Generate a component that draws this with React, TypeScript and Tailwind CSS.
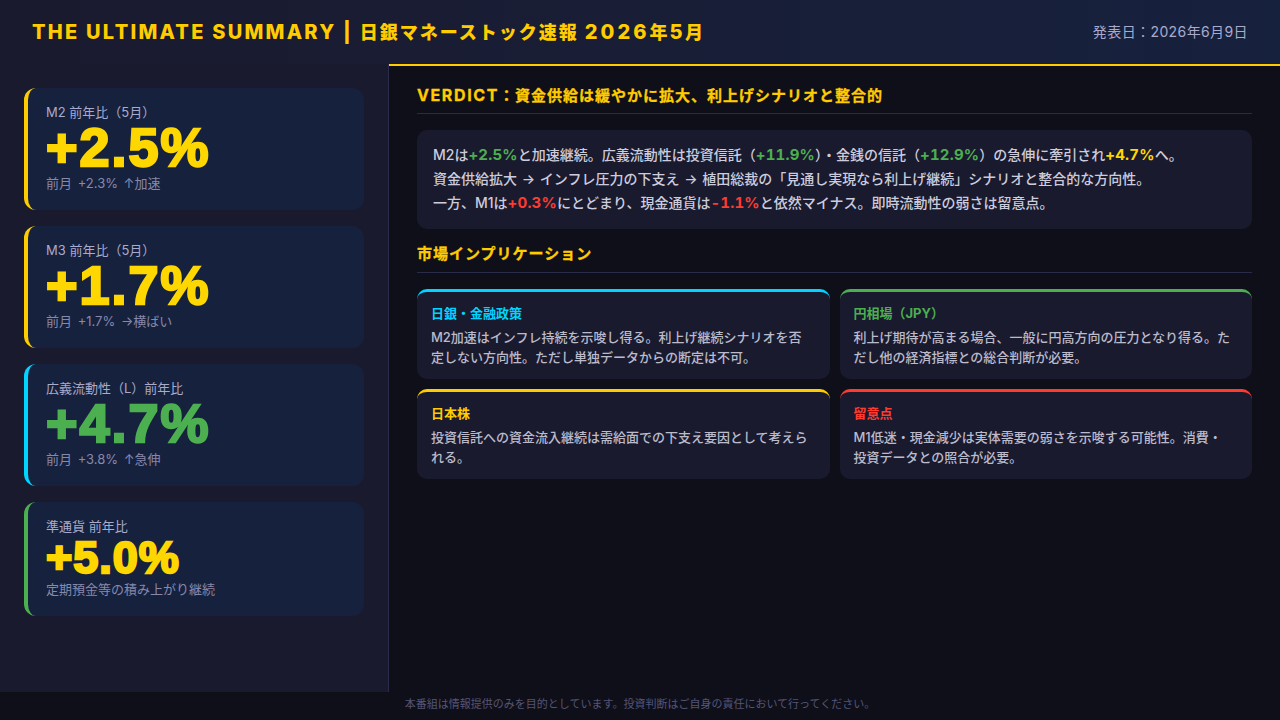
const font = { fontFamily: 'Inter, "Noto Sans CJK JP", sans-serif' };
const bigFont = { fontFamily: '"Liberation Sans", "Noto Sans CJK JP", sans-serif' };

const metrics = [
  { label: 'M2 前年比（5月）', value: '+2.5%', sub: '前月 +2.3% ↑加速', border: 'border-[#ffcc00]', color: 'text-[#ffd700]', size: 'text-[54px] leading-[53px] tracking-[2px]' },
  { label: 'M3 前年比（5月）', value: '+1.7%', sub: '前月 +1.7% →横ばい', border: 'border-[#ffcc00]', color: 'text-[#ffd700]', size: 'text-[54px] leading-[53px] tracking-[2px]' },
  { label: '広義流動性（L）前年比', value: '+4.7%', sub: '前月 +3.8% ↑急伸', border: 'border-[#00d4ff]', color: 'text-[#4caf50]', size: 'text-[54px] leading-[53px] tracking-[2px]' },
  { label: '準通貨 前年比', value: '+5.0%', sub: '定期預金等の積み上がり継続', border: 'border-[#4caf50]', color: 'text-[#ffd700]', size: 'text-[45px] leading-[45px] tracking-[1px]' },
];

const cards = [
  { title: '日銀・金融政策', body: 'M2加速はインフレ持続を示唆し得る。利上げ継続シナリオを否\n定しない方向性。ただし単独データからの断定は不可。', border: 'border-[#00d4ff]', color: 'text-[#00d4ff]' },
  { title: '円相場（JPY）', body: '利上げ期待が高まる場合、一般に円高方向の圧力となり得る。た\nだし他の経済指標との総合判断が必要。', border: 'border-[#4caf50]', color: 'text-[#4caf50]' },
  { title: '日本株', body: '投資信託への資金流入継続は需給面での下支え要因として考えら\nれる。', border: 'border-[#ffcc00]', color: 'text-[#ffcc00]' },
  { title: '留意点', body: 'M1低迷・現金減少は実体需要の弱さを示唆する可能性。消費・\n投資データとの照合が必要。', border: 'border-[#ff3b30]', color: 'text-[#ff3b30]' },
];

function Num({ color, children }: { color: string; children: string }) {
  return <b className={`text-[15px] tracking-[0.2px] tabular-nums ${color}`}>{children}</b>;
}

export default function App() {
  return (
    <div style={font} className="flex h-[720px] w-[1280px] flex-col overflow-hidden bg-[#0f0f1a]">
      {/* Header */}
      <div className="flex h-[64px] shrink-0 items-center justify-between bg-gradient-to-r from-[#1a1a2e] to-[#16213e] px-[32px]">
        <h1 className="text-[18px] font-extrabold tracking-[2px] text-[#ffcc00]">
          <span className="text-[20px] tracking-[2.25px]">THE ULTIMATE SUMMARY | </span>日銀マネーストック速報 <span className="text-[20px] tracking-[3px]">2026</span>年<span className="text-[20px] tracking-[2.5px]">5</span>月
        </h1>
        <span className="pb-0.5 text-[14px] tracking-[0.4px] text-[#aaaacc]">発表日：2026年6月9日</span>
      </div>

      <div className="flex min-h-0 flex-1">
        {/* Metrics */}
        <div className="flex w-[389px] shrink-0 flex-col gap-4 border-r border-[#2a2a4a] bg-[#1a1a2e] p-6">
          {metrics.map((m) => (
            <div key={m.label} className={`rounded-xl border-l-4 bg-[#16213e] pb-[18px] pl-[18px] pr-[18px] pt-[15px] ${m.border}`}>
              <div className="text-[13px] leading-[18px] text-[#aaaacc]">{m.label}</div>
              <div style={bigFont} className={`font-bold [-webkit-text-stroke:2.4px_currentColor] ${m.size} ${m.color}`}>{m.value}</div>
              <div className="text-[13px] leading-[18px] text-[#8888aa] [word-spacing:2px]">{m.sub}</div>
            </div>
          ))}
        </div>

        {/* Verdict + implications */}
        <div className="min-w-0 flex-1 border-t-2 border-[#ffcc00] px-7 pt-[18px]">
          <h2 className="h-[30px] border-b border-[#2a2a4a] text-[15px] font-bold leading-[22px] tracking-[1px] text-[#ffcc00] [-webkit-text-stroke:0.3px_currentColor]">
            <span className="text-[16px] tracking-[1.6px]">VERDICT</span>：資金供給は緩やかに拡大、利上げシナリオと整合的
          </h2>
          <div className="mt-4 rounded-[10px] bg-[#1a1a2e] pb-[14px] pl-4 pr-4 pt-[13px] text-[14px] font-medium leading-[24px] text-[#ccccdd]">
            <p className="h-6">M2は<Num color="text-[#4caf50]">+2.5%</Num>と加速継続。広義流動性は投資信託（<Num color="text-[#4caf50]">+11.9%</Num>）・金銭の信託（<Num color="text-[#4caf50]">+12.9%</Num>）の急伸に牽引され<Num color="text-[#ffd700]">+4.7%</Num>へ。</p>
            <p className="h-6 [word-spacing:1px]">資金供給拡大 → インフレ圧力の下支え → 植田総裁の「見通し実現なら利上げ継続」シナリオと整合的な方向性。</p>
            <p className="h-6">一方、M1は<Num color="text-[#ff3b30]">+0.3%</Num>にとどまり、現金通貨は<Num color="text-[#ff3b30]">-1.1%</Num>と依然マイナス。即時流動性の弱さは留意点。</p>
          </div>

          <h2 className="mt-[14px] h-[30px] border-b border-[#2a2a4a] text-[15px] font-bold leading-[22px] tracking-[1px] text-[#ffcc00] [-webkit-text-stroke:0.3px_currentColor]">市場インプリケーション</h2>
          <div className="mt-4 grid grid-cols-2 gap-[10px]">
            {cards.map((c) => (
              <div key={c.title} className={`h-[90px] rounded-[10px] border-t-[3px] bg-[#1a1a2e] px-[14px] pt-[11px] ${c.border}`}>
                <div className={`mb-1 text-[13px] font-bold leading-[20px] ${c.color}`}>{c.title}</div>
                <div className="whitespace-pre-line text-[13px] font-medium leading-[20px] text-[#bbbbcc]">{c.body}</div>
              </div>
            ))}
          </div>
        </div>
      </div>

      {/* Disclaimer */}
      <div className="flex h-[28px] shrink-0 items-center justify-center pb-1 text-[11px] text-[#555577]">本番組は情報提供のみを目的としています。投資判断はご自身の責任において行ってください。</div>
    </div>
  );
}
